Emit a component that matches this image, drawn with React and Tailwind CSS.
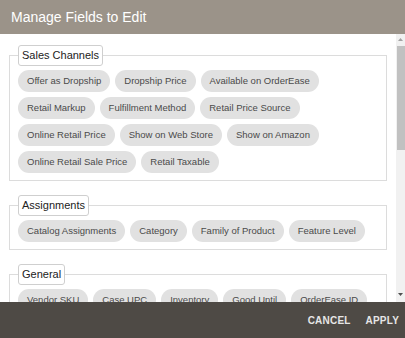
const groups = [
  {
    title: 'Sales Channels',
    fields: [
      'Offer as Dropship',
      'Dropship Price',
      'Available on OrderEase',
      'Retail Markup',
      'Fulfillment Method',
      'Retail Price Source',
      'Online Retail Price',
      'Show on Web Store',
      'Show on Amazon',
      'Online Retail Sale Price',
      'Retail Taxable',
    ],
  },
  {
    title: 'Assignments',
    fields: ['Catalog Assignments', 'Category', 'Family of Product', 'Feature Level'],
  },
  {
    title: 'General',
    fields: ['Vendor SKU', 'Case UPC', 'Inventory', 'Good Until', 'OrderEase ID'],
  },
]

function FieldGroup({ title, fields }) {
  return (
    <fieldset className="border border-[#dcdcdc] mx-[9px] mb-[14px] px-[8px] pt-[4px] pb-[7px]">
      <legend className="border border-[#cfcfcf] rounded-[3px] bg-white px-[3px] h-[21px] leading-[19px] text-[11px] text-[#222]">
        {title}
      </legend>
      <div className="flex flex-wrap gap-[5px]">
        {fields.map((f) => (
          <span
            key={f}
            className="h-[22px] px-[9px] rounded-full bg-[#e1e1e1] text-[9.5px] text-[#4a4a4a] flex items-center whitespace-nowrap"
          >
            {f}
          </span>
        ))}
      </div>
    </fieldset>
  )
}

export default function App() {
  return (
    <div className="w-[405px] h-[338px] flex flex-col bg-white font-['Liberation_Sans',Arial,sans-serif] overflow-hidden">
      {/* Header */}
      <div className="h-[34px] shrink-0 bg-[#9b9389] flex items-center px-[11px]">
        <h1 className="text-[14px] text-white leading-none">Manage Fields to Edit</h1>
      </div>

      {/* Body */}
      <div className="flex-1 flex min-h-0">
        <div className="flex-1 overflow-hidden pt-[11px]">
          {groups.map((g) => (
            <FieldGroup key={g.title} title={g.title} fields={g.fields} />
          ))}
        </div>
        {/* Scrollbar */}
        <div className="w-[9px] shrink-0 bg-[#f1f1f1] flex flex-col items-center">
          <svg width="5" height="3" viewBox="0 0 5 3" className="mt-[4px]">
            <path d="M0 3 L2.5 0 L5 3 Z" fill="#a3a3a3" />
          </svg>
          <div className="w-[8px] h-[104px] bg-[#c1c1c1] mt-[5px]" />
          <div className="flex-1" />
          <svg width="5" height="3" viewBox="0 0 5 3" className="mb-[6px]">
            <path d="M0 0 L5 0 L2.5 3 Z" fill="#505050" />
          </svg>
        </div>
      </div>

      {/* Footer */}
      <div className="h-[36px] shrink-0 bg-[#4e4a45] flex items-center justify-end gap-[15px] pr-[6px]">
        <button className="text-[10px] font-bold text-[#e6e6e6] tracking-[0.2px]">CANCEL</button>
        <button className="text-[10px] font-bold text-[#e6e6e6] tracking-[0.2px]">APPLY</button>
      </div>
    </div>
  )
}
